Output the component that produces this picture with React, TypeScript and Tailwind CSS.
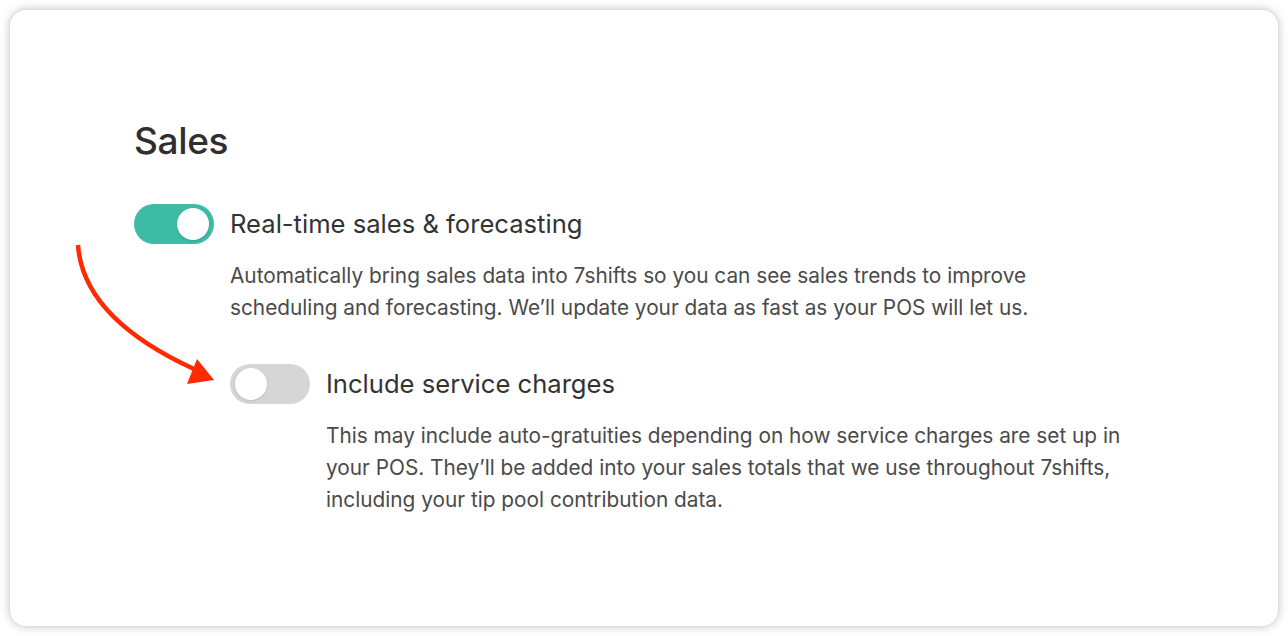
import React from "react";

function Toggle({ on }: { on: boolean }) {
  return (
    <div
      className={
        "relative h-[40px] w-[80px] shrink-0 rounded-full " +
        (on ? "bg-[#3dbca5]" : "bg-[#d6d6d6]")
      }
    >
      <div
        className={
          "absolute top-[4px] h-[32px] w-[32px] rounded-full bg-white shadow-[0_1px_3px_rgba(0,0,0,0.12)] " +
          (on ? "right-[5px]" : "left-[5px]")
        }
      />
    </div>
  );
}

export default function App() {
  return (
    <div className="h-[636px] w-[1288px] bg-white p-[10px] font-['Inter',sans-serif]">
      <div className="relative h-[616px] w-[1268px] rounded-[16px] bg-white pl-[124px] pt-[107px] shadow-[0_0_10px_rgba(0,0,0,0.28)]">
        <h1 className="text-[37px] leading-[48px] font-medium tracking-[-0.01em] text-[#2f2f2f]">Sales</h1>

        <div className="mt-[39px] flex items-center gap-4">
          <Toggle on />
          <div className="text-[25.6px] leading-[40px] text-[#333333]">Real-time sales &amp; forecasting</div>
        </div>
        <p className="ml-[96px] mt-4 w-[840px] text-[20.8px] leading-[32px] text-[#4a4a4a]">
          Automatically bring sales data into 7shifts so you can see sales trends to improve scheduling and forecasting. We’ll update your data as fast as your POS will let us.
        </p>

        <div className="ml-[96px] mt-10 flex items-center gap-4">
          <Toggle on={false} />
          <div className="text-[25.6px] leading-[40px] text-[#333333]">Include service charges</div>
        </div>
        <p className="ml-[192px] mt-4 w-[820px] text-[20.8px] leading-[32px] text-[#4a4a4a]">
          This may include auto-gratuities depending on how service charges are set up in your POS. They’ll be added into your sales totals that we use throughout 7shifts, including your tip pool contribution data.
        </p>

        <svg
          className="pointer-events-none absolute left-0 top-0"
          width="1268"
          height="616"
          viewBox="10 10 1268 616"
        >
          <path d="M78 245 Q 83 318 194 369" fill="none" stroke="#ff2a00" strokeWidth="4.5" strokeLinecap="butt" />
          <polygon points="214,380 197,359 187,384" fill="#ff2a00" />
        </svg>
      </div>
    </div>
  );
}
